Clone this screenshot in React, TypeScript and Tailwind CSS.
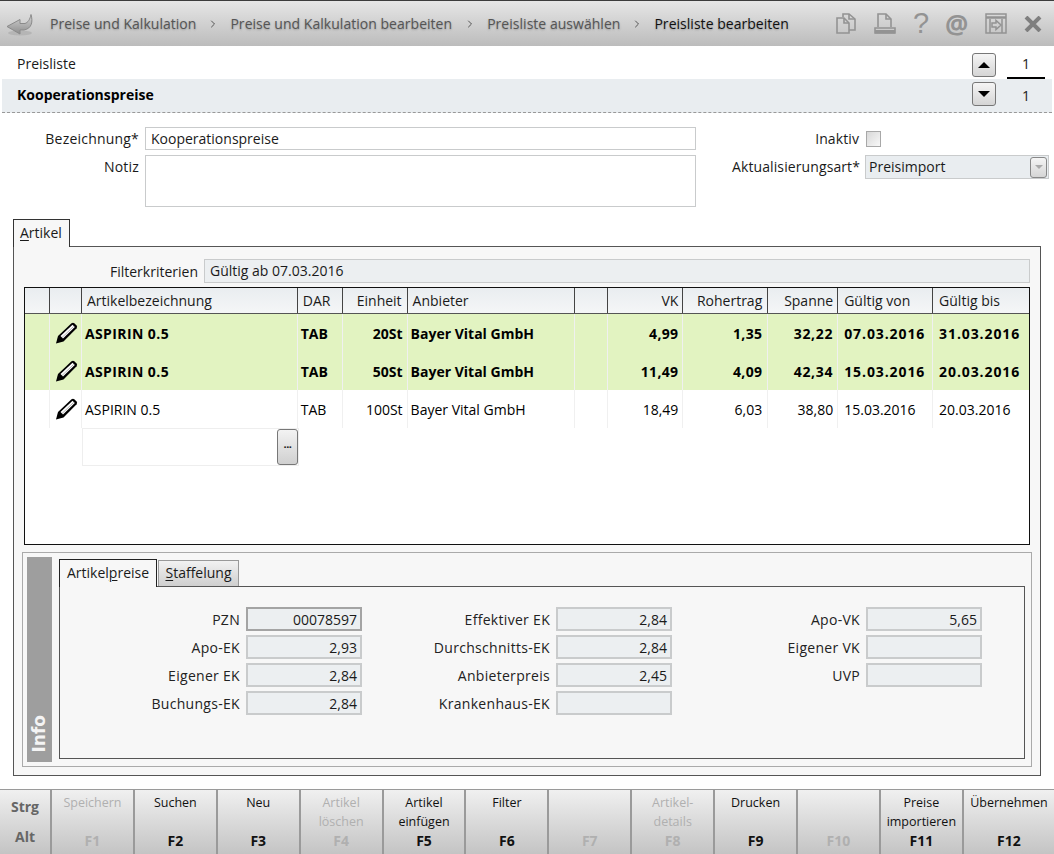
import { ChevronRight } from "lucide-react";

const font = "font-['Open_Sans','Noto_Sans',sans-serif]";

function PageIcons() {
  return (
    <div className="flex items-center text-[#939393]">
      <svg width="20" height="21" viewBox="0 0 20 21" fill="none" stroke="currentColor" strokeWidth="1.600">
        <path d="M7 4V1h6l6 5v11h-6" />
        <path d="M1 5h7l5 5v10H1z" />
        <path d="M8 5v5h5" />
        <path d="M13 1v5h6" />
      </svg>
      <svg width="22" height="21" viewBox="0 0 22 21" fill="none" stroke="currentColor" strokeWidth="1.600" className="ml-[18px]">
        <path d="M4 14V1h8l5 5v8" />
        <path d="M12 1v5h5" />
        <path d="M1 20v-5h20v5z" />
        <rect x="1" y="17" width="20" height="3.500" fill="currentColor" stroke="none" />
      </svg>
      <span className="ml-[17px] w-[16px] text-center text-[29px] leading-none font-['Liberation_Sans']">?</span>
      <span className="ml-[16px] w-[22px] text-center text-[26px] leading-none font-bold">@</span>
      <svg width="22" height="21" viewBox="0 0 22 21" fill="none" stroke="currentColor" strokeWidth="1.500" className="ml-[18px]">
        <rect x="1" y="1" width="20" height="19" />
        <path d="M1 4.500h20" strokeWidth="2.500" />
        <path d="M5 6v14M17 6v14" />
        <path d="M7 10h4V7.500l5 4.500-5 4.500V14H7z" />
      </svg>
      <svg width="18" height="16" viewBox="0 0 18 16" className="ml-[17px] text-[#7f7f7f]">
        <path d="M2 1l14 14M16 1L2 15" stroke="currentColor" strokeWidth="4" />
      </svg>
    </div>
  );
}

function BackArrow() {
  return (
    <svg width="28" height="24" viewBox="0 0 28 24" className="mr-[16px]">
      <defs>
        <linearGradient id="arrow" x1="0" y1="0" x2="0" y2="1">
          <stop offset="0" stopColor="#d6d6d6" />
          <stop offset="1" stopColor="#8d8d8d" />
        </linearGradient>
      </defs>
      <ellipse cx="14" cy="21" rx="12" ry="2.500" fill="#a8a8a8" opacity="0.6" />
      <path d="M1 14.500L14 7.500v4h5c3-1 5-4 6-9 2 7 1 14-7 15.500h-4v4z" fill="url(#arrow)" stroke="#8a8a8a" strokeWidth="1" />
    </svg>
  );
}

function Pencil() {
  return (
    <svg width="23" height="22" viewBox="0 0 23 22">
      <path d="M1 21.500l2-7.500L16.500 1.200q1.500-1 2.800 0l2.300 2.300q1 1.300 0 2.800L8.500 19.500z" fill="#000" />
      <path d="M5.500 14L17.500 2.800l2.300 2.200L8 16.500z" fill="#fff" />
      <path d="M7 15.500L18.500 4.500" stroke="#b5b5b5" strokeWidth="1" />
    </svg>
  );
}

function Field({ label, value, active }: { label: string; value?: string; active?: boolean }) {
  return (
    <div className="flex items-center h-[24px] mb-[4px]">
      <span className="w-[186px] pr-[6px] text-right text-[#222] tracking-[0.3px]">{label}</span>
      <div
        className={
          "w-[116px] h-[24px] px-[3px] flex items-center justify-end bg-[#eceff1] border-2 " +
          (active ? "border-[#a4a4a4]" : "border-[#c9cbcc]")
        }
      >
        {value}
      </div>
    </div>
  );
}

const columns = [
  { label: "", w: "w-[25px]", cell: "" },
  { label: "", w: "w-[32px]", cell: "" },
  { label: "Artikelbezeichnung", w: "w-[216px]", cell: "pl-[3px]", head: "pl-[5px]", boldCell: "tracking-[0.4px]" },
  { label: "DAR", w: "w-[45px]", cell: "pl-[3px]", head: "pl-[5px]" },
  { label: "Einheit", w: "w-[65px]", cell: "justify-end pr-[4px]", head: "justify-end pr-[5px]" },
  { label: "Anbieter", w: "w-[168px]", cell: "pl-[3px]", head: "pl-[5px]" },
  { label: "", w: "w-[33px]", cell: "" },
  { label: "VK", w: "w-[75px]", cell: "justify-end pr-[4px]", head: "justify-end pr-[4px]", boldCell: "tracking-[0.3px]" },
  { label: "Rohertrag", w: "w-[85px]", cell: "justify-end pr-[5px]", head: "justify-end pr-[5px]", boldCell: "tracking-[0.3px]" },
  { label: "Spanne", w: "w-[70px]", cell: "justify-end pr-[4px]", head: "justify-end pr-[4px]", boldCell: "tracking-[0.7px]" },
  { label: "Gültig von", w: "w-[95px]", cell: "pl-[6px]", head: "pl-[6px]", boldCell: "tracking-[0.9px]" },
  { label: "Gültig bis", w: "w-[96px]", cell: "pl-[6px]", head: "pl-[6px]", boldCell: "tracking-[0.9px]" },
];

const rows = [
  { bold: true, values: ["ASPIRIN 0.5", "TAB", "20St", "Bayer Vital GmbH", "", "4,99", "1,35", "32,22", "07.03.2016", "31.03.2016"] },
  { bold: true, values: ["ASPIRIN 0.5", "TAB", "50St", "Bayer Vital GmbH", "", "11,49", "4,09", "42,34", "15.03.2016", "20.03.2016"] },
  { bold: false, values: ["ASPIRIN 0.5", "TAB", "100St", "Bayer Vital GmbH", "", "18,49", "6,03", "38,80", "15.03.2016", "20.03.2016"] },
];

const keys = [
  { top: "Speichern", f: "F1", off: true },
  { top: "Suchen", f: "F2" },
  { top: "Neu", f: "F3" },
  { top: "Artikel löschen", f: "F4", off: true },
  { top: "Artikel einfügen", f: "F5" },
  { top: "Filter", f: "F6" },
  { top: "", f: "F7", off: true },
  { top: "Artikel- details", f: "F8", off: true },
  { top: "Drucken", f: "F9" },
  { top: "", f: "F10", off: true },
  { top: "Preise importieren", f: "F11" },
];

const keyFace = "bg-gradient-to-b from-[#f0f0f0] to-[#c4c4c4]";

export default function App() {
  return (
    <div className={"w-[1054px] h-[854px] overflow-hidden flex flex-col bg-white text-[14px] leading-[19px] text-[#1a1a1a] " + font}>
      {/* Breadcrumb */}
      <div className="h-[46px] shrink-0 border-t border-[#3c3c3c] bg-gradient-to-b from-[#e6e6e6] to-[#bcbcbc] flex items-center pl-[6px] pr-[12px]">
        <BackArrow />
        <div className="flex items-center tracking-[0.03px] text-[#555] [text-shadow:0_1px_2px_#999]">
          <span>Preise und Kalkulation</span>
          <ChevronRight className="w-[12px] h-[12px] mx-[11px]" />
          <span>Preise und Kalkulation bearbeiten</span>
          <ChevronRight className="w-[12px] h-[12px] mx-[11.5px]" />
          <span>Preisliste auswählen</span>
          <ChevronRight className="w-[12px] h-[12px] mx-[11px]" />
          <span className="text-[#111]">Preisliste bearbeiten</span>
        </div>
        <div className="ml-auto">
          <PageIcons />
        </div>
      </div>

      {/* Title */}
      <div className="h-[33px] shrink-0 flex items-center pl-[17px] pr-[9px]">
        <span className="mt-[2px]">Preisliste</span>
        <button className="ml-auto w-[24px] h-[24px] mt-[5px] rounded-[3px] border border-[#777] bg-gradient-to-b from-[#f5f5f5] to-[#d5d5d5] flex items-center justify-center">
          <span className="border-x-[6px] border-x-transparent border-b-[6px] border-b-black" />
        </button>
        <span className="w-[38px] ml-[11px] h-[27px] mt-[6px] pt-[2px] text-center border-b-2 border-black">1</span>
      </div>
      <div className="h-[34px] shrink-0 mx-[2px] bg-[#e9edf0] border-b border-dashed border-[#999] flex items-center pl-[15px] pr-[7px] pb-[3px]">
        <span className="font-bold text-black">Kooperationspreise</span>
        <button className="ml-auto w-[24px] h-[24px] rounded-[3px] border border-[#777] bg-gradient-to-b from-[#f5f5f5] to-[#d5d5d5] flex items-center justify-center">
          <span className="border-x-[6px] border-x-transparent border-t-[6px] border-t-black" />
        </button>
        <span className="w-[38px] ml-[11px] mt-[3px] text-center">1</span>
      </div>

      {/* Form */}
      <div className="h-[106px] shrink-0 pt-[14px] flex">
        <div className="w-[139px] text-right tracking-[0.2px]">
          <div className="h-[23px] leading-[23px]">Bezeichnung*</div>
          <div className="mt-[5px] h-[23px] leading-[23px]">Notiz</div>
        </div>
        <div className="ml-[6px] w-[551px]">
          <div className="h-[23px] px-[5px] leading-[21px] border border-[#c9cbcc]">Kooperationspreise</div>
          <div className="mt-[5px] h-[52px] border border-[#c9cbcc]" />
        </div>
        <div className="ml-[5px] w-[164px] text-right pr-[5px] tracking-[0.1px]">
          <div className="h-[23px] leading-[23px] pr-px">Inaktiv</div>
          <div className="mt-[5px] h-[24px] leading-[24px] whitespace-nowrap">Aktualisierungsart*</div>
        </div>
        <div className="w-[184px]">
          <div className="h-[23px] pt-[4px] pl-px">
            <div className="w-[15px] h-[16px] border border-[#a8a8a8] bg-gradient-to-br from-[#d8d8d8] to-[#f8f8f8]" />
          </div>
          <div className="mt-[5px] h-[24px] pl-[3px] pr-px flex items-center justify-between bg-[#e9edf0] border border-[#c9cbcc]">
            <span className="pb-[2px]">Preisimport</span>
            <span className="w-[17px] h-[21px] rounded-[3px] border border-[#888] bg-gradient-to-b from-[#f5f5f5] to-[#d5d5d5] flex items-center justify-center">
              <span className="border-x-[4px] border-x-transparent border-t-[4px] border-t-[#aaa]" />
            </span>
          </div>
        </div>
      </div>

      {/* Artikel tab */}
      <div className="mx-[13px] w-[1028px] h-[557px] shrink-0 flex flex-col">
        <div className="h-[27px] flex">
          <div className="w-[57px] border border-b-0 border-[#333] bg-[#f7f7f7] pl-[6px] leading-[26px] h-[28px] z-10">
            <u className="decoration-1 underline-offset-2">A</u>rtikel
          </div>
        </div>
        <div className="flex-1 border border-[#555] bg-[#f7f7f7] px-[10px] pt-[12px] flex flex-col">
          <div className="flex h-[24px] items-center">
            <span className="w-[180px] pr-[6px] text-right">Filterkriterien</span>
            <div className="w-[826px] h-[24px] px-[5px] bg-[#eceff1] border border-[#c9cbcc] leading-[22px]">Gültig ab 07.03.2016</div>
          </div>

          {/* Table */}
          <div className="mt-[4px] h-[258px] border border-[#111] bg-white flex flex-col">
            <div className="h-[26px] shrink-0 flex bg-gradient-to-b from-[#e9edf0] to-[#f5f6f7] border-b border-[#555]">
              {columns.map((c, i) => (
                <div key={i} className={"flex items-center h-full whitespace-nowrap border-r border-[#444] last:border-r-0 " + c.w + " " + (c.head ?? "")}>
                  {c.label}
                </div>
              ))}
            </div>
            {rows.map((r, i) => (
              <div key={i} className={"h-[38px] shrink-0 flex text-black " + (r.bold ? "font-bold bg-[#e2f3c1]" : "bg-white")}>
                {columns.map((c, j) => (
                  <div
                    key={j}
                    className={
                      "flex items-center h-full whitespace-nowrap border-r border-[#f0f0f0] last:border-r-0 " +
                      c.w + " " + c.cell + " " + (r.bold ? c.boldCell ?? "" : "")
                    }
                  >
                    {j === 1 ? (
                      <span className="pl-[5px]">
                        <Pencil />
                      </span>
                    ) : j > 1 ? (
                      r.values[j - 2]
                    ) : null}
                  </div>
                ))}
              </div>
            ))}
            <div className="h-[38px] shrink-0 pl-[57px]">
              <div className="w-[217px] h-full border border-[#eee] flex justify-end">
                <button className="w-[21px] h-full pb-[6px] rounded-[3px] border border-[#777] bg-gradient-to-b from-[#f3f3f3] to-[#d0d0d0] font-bold text-[11px] tracking-[-0.5px] leading-[14px]">
                  ...
                </button>
              </div>
            </div>
          </div>

          {/* Info */}
          <div className="mt-[7px] -mx-[2px] h-[215px] border border-[#aaa] p-[4px] flex">
            <div className="w-[25px] bg-[#9e9e9e] flex items-end justify-center pb-[9px]">
              <span className="[writing-mode:vertical-rl] rotate-180 text-[#f4f4f4] text-[17px] font-bold font-['DejaVu_Sans'] leading-[25px]">Info</span>
            </div>
            <div className="ml-[7px] mr-[2px] mb-[3px] flex-1 flex flex-col pt-[2px]">
              <div className="h-[27px] flex shrink-0">
                <div className="w-[98px] h-[28px] border border-b-0 border-[#222] bg-[#f7f7f7] pl-[7px] leading-[26px] z-10">
                  Artikel<u className="decoration-1 underline-offset-2">p</u>reise
                </div>
                <div className="ml-[1px] w-[81px] mt-[1px] border border-[#999] border-b-0 bg-gradient-to-b from-[#f2f2f2] to-[#cfcfcf] text-center leading-[24px]">
                  <u className="decoration-1 underline-offset-2">S</u>taffelung
                </div>
              </div>
              <div className="flex-1 border border-[#555] pt-[20px] flex">
                <div className="w-[310px]">
                  <Field label="PZN" value="00078597" active />
                  <Field label="Apo-EK" value="2,93" />
                  <Field label="Eigener EK" value="2,84" />
                  <Field label="Buchungs-EK" value="2,84" />
                </div>
                <div className="w-[310px]">
                  <Field label="Effektiver EK" value="2,84" />
                  <Field label="Durchschnitts-EK" value="2,84" />
                  <Field label="Anbieterpreis" value="2,45" />
                  <Field label="Krankenhaus-EK" />
                </div>
                <div className="w-[310px]">
                  <Field label="Apo-VK" value="5,65" />
                  <Field label="Eigener VK" />
                  <Field label="UVP" />
                </div>
              </div>
            </div>
          </div>
        </div>
      </div>

      {/* Function keys */}
      <div className="mt-[13px] h-[65px] shrink-0 flex bg-[#9a9a9a] gap-[2px] pt-px">
        <div className={"w-[50px] shrink-0 flex flex-col items-center justify-between pt-[7px] pb-[8px] font-bold text-[#666] " + keyFace}>
          <span>Strg</span>
          <span>Alt</span>
        </div>
        {keys.map((k) => (
          <div
            key={k.f}
            className={
              "w-[80.9px] shrink-0 flex flex-col items-center justify-between pt-[3px] pb-[4px] text-center " +
              keyFace + " " + (k.off ? "text-[#b0b0b0]" : "text-[#111]")
            }
          >
            <span className="text-[12.5px] leading-[19px]">{k.top}</span>
            <span className="font-bold">{k.f}</span>
          </div>
        ))}
        <div className={"flex-1 flex flex-col items-center justify-between pt-[3px] pb-[4px] text-center text-[#111] " + keyFace}>
          <span className="text-[12.5px] leading-[19px]">Übernehmen</span>
          <span className="font-bold">F12</span>
        </div>
      </div>
    </div>
  );
}
